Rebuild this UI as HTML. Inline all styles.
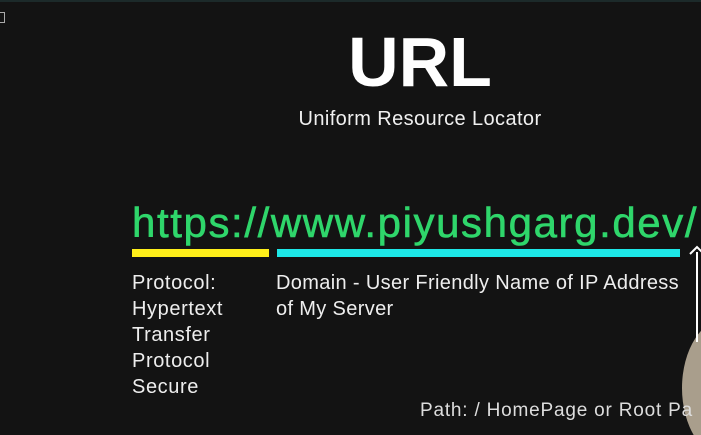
<!DOCTYPE html><html style="overflow:hidden;width:701px;height:435px"><head><style>
body{margin:0;width:701px;height:435px;background:#131313;overflow:hidden;position:relative;font-family:"Liberation Sans",sans-serif;color:#eee}
div{position:absolute;white-space:nowrap}
</style></head><body>
<div style="left:0;top:0;width:701px;height:2px;background:#1c2a2a"></div>
<div style="left:0;top:12px;width:4px;height:9px;border:1px solid #aaa;border-left:none"></div>
<div style="left:320px;top:22px;width:200px;text-align:center;font-size:70px;font-weight:bold;color:#fff">URL</div>
<div style="left:270px;top:108px;width:300px;text-align:center;font-size:20px;color:#f0f0f0;letter-spacing:0.4px">Uniform Resource Locator</div>
<div style="left:132px;top:199px;font-size:42px;color:#2fd66b;letter-spacing:1.6px;-webkit-text-stroke:0.6px #2fd66b">https://www.piyushgarg.dev/</div>
<div style="left:132px;top:249px;width:137px;height:8px;background:#ffef1a"></div>
<div style="left:277px;top:249px;width:403px;height:8px;background:#1de8e8"></div>
<div style="left:132px;top:270px;font-size:20px;line-height:26px;color:#eee;letter-spacing:0.6px">Protocol:<br>Hypertext<br>Transfer<br>Protocol<br>Secure</div>
<div style="left:276px;top:270px;font-size:20px;line-height:26px;color:#eee;letter-spacing:0.35px">Domain - User Friendly Name of IP Address<br>of My Server</div>
<svg style="position:absolute;left:660px;top:300px" width="41" height="135"><ellipse cx="67" cy="88" rx="45" ry="70" fill="#a99e8c"/></svg>
<div style="left:696px;top:252px;width:2px;height:90px;background:#fff"></div>
<svg style="position:absolute;left:688px;top:244px" width="13" height="14"><path d="M2 10 L9 3 L16 10" stroke="#fff" stroke-width="2" fill="none"/></svg>
<div style="left:420px;top:400px;font-size:19px;line-height:22px;color:#ddd;letter-spacing:0.8px">Path: / HomePage or Root Pa</div>
</body></html>
